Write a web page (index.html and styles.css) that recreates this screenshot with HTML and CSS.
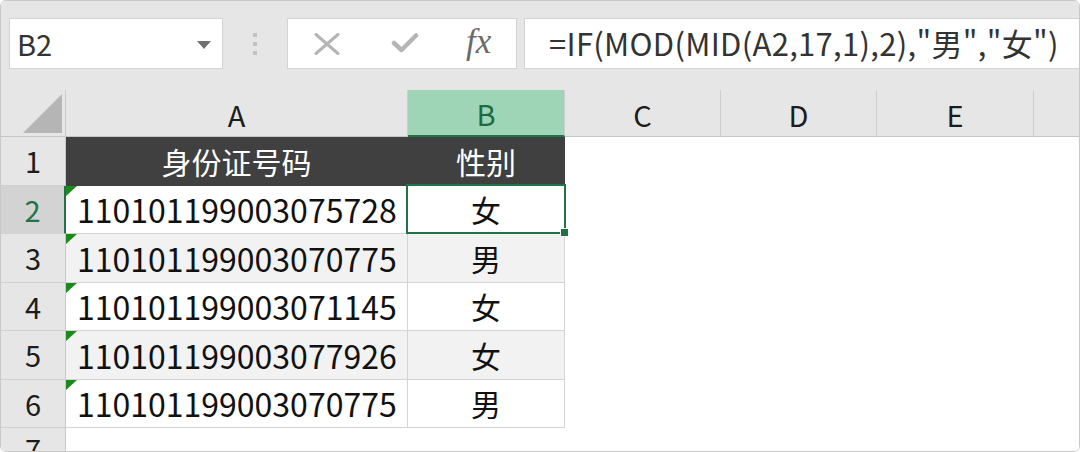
FILE: index.html
```html
<!DOCTYPE html>
<html lang="zh-CN">
<head>
<meta charset="utf-8">
<title>Excel</title>
<link rel="stylesheet" href="styles.css">
</head>
<body>
<div class="frame">
  <div class="toolbar">
    <div class="namebox"><span class="name">B2</span><span class="caret"></span></div>
    <div class="grip"><i></i><i></i><i></i></div>
    <div class="fxbox">
      <svg class="ico-x" width="28" height="22" viewBox="0 0 28 22"><path d="M3 1.5 L25 20.5 M25 1.5 L3 20.5" stroke="#b5b5b5" stroke-width="3" fill="none" stroke-linecap="round"/></svg>
      <svg class="ico-check" width="28" height="22" viewBox="0 0 28 22"><path d="M3 11 L10.5 18 L25 3.5" stroke="#b5b5b5" stroke-width="4.5" fill="none" stroke-linecap="round" stroke-linejoin="round"/></svg>
      <span class="fx">fx</span>
    </div>
    <div class="formula">=IF(MOD(MID(A2,17,1),2),"男","女")</div>
  </div>
  <div class="sheet">
    <div class="ch corner"><span class="tri"></span></div>
    <div class="ch">A</div>
    <div class="ch sel">B</div>
    <div class="ch">C</div>
    <div class="ch">D</div>
    <div class="ch">E</div>
    <div class="ch last"></div>

    <div class="rh">1</div>
    <div class="c head">身份证号码</div>
    <div class="c head">性别</div>
    <div class="blank"></div>

    <div class="rh rsel">2</div>
    <div class="c num"><span class="flag"></span>110101199003075728</div>
    <div class="c g active">女<span class="handle"></span></div>
    <div class="blank"></div>

    <div class="rh">3</div>
    <div class="c num alt"><span class="flag"></span>110101199003070775</div>
    <div class="c g alt">男</div>
    <div class="blank"></div>

    <div class="rh">4</div>
    <div class="c num"><span class="flag"></span>110101199003071145</div>
    <div class="c g">女</div>
    <div class="blank"></div>

    <div class="rh">5</div>
    <div class="c num alt"><span class="flag"></span>110101199003077926</div>
    <div class="c g alt">女</div>
    <div class="blank"></div>

    <div class="rh">6</div>
    <div class="c num"><span class="flag"></span>110101199003070775</div>
    <div class="c g">男</div>
    <div class="blank"></div>

    <div class="rh r7">7</div>
    <div class="empty"></div>
  </div>
</div>
</body>
</html>
```
FILE: styles.css
```css
* { box-sizing: border-box; margin: 0; padding: 0; }
html, body { width: 1080px; height: 452px; overflow: hidden; background: #fff; }
body { font-family: "Noto Sans CJK SC", "Noto Sans", sans-serif; }

.frame {
  width: 1080px; height: 452px;
  border: 1px solid #c9c9c9;
  border-radius: 6px;
  overflow: hidden;
  display: flex; flex-direction: column;
  background: #fff;
}

.toolbar {
  height: 89px;
  background: #e6e6e6;
  display: flex;
  align-items: flex-start;
  padding: 17px 0 0 8px;
  flex: none;
}
.namebox {
  width: 214px; height: 51px;
  background: #fff;
  border: 1px solid #d3d3d3;
  display: flex; align-items: center; justify-content: space-between;
  padding: 0 11px 0 7px;
}
.name { font-size: 29px; color: #333; line-height: 1; }
.caret {
  width: 0; height: 0;
  border-left: 7.5px solid transparent;
  border-right: 7.5px solid transparent;
  border-top: 8px solid #707070;
  margin-top: 2px;
}
.grip {
  width: 64px; height: 51px;
  display: flex; flex-direction: column; align-items: center; justify-content: center;
  gap: 5px;
}
.grip i { display: block; width: 4px; height: 4px; background: #c2c2c2; }
.fxbox {
  width: 230px; height: 51px;
  background: #fff;
  border: 1px solid #d3d3d3;
  display: flex; align-items: center;
  padding-left: 25px;
}
.ico-x { margin-right: 50px; }
.ico-check { margin-right: 47px; margin-top: -2px; }
.fx {
  font-family: "Liberation Serif", "DejaVu Serif", serif;
  font-style: italic;
  font-size: 35px;
  color: #6a6a6a;
  line-height: 1;
  margin-top: -4px;
}
.formula {
  flex: 1;
  height: 51px;
  margin-left: 7px;
  margin-right: -4px;
  background: #fff;
  border: 1px solid #d3d3d3;
  padding-left: 24px;
  font-size: 31px;
  letter-spacing: 0.3px;
  color: #333;
  line-height: 47px;
  white-space: nowrap;
}

.sheet {
  flex: 1;
  display: grid;
  grid-template-columns: 65px 342px 157px 156px 156px 157px 1fr;
  grid-template-rows: 47px repeat(6, 48.5px) 1fr;
  background: #fff;
}

.ch {
  background: #e6e6e6;
  border-right: 1px solid #cdcdcd;
  border-bottom: 1px solid #c4c4c4;
  display: flex; align-items: center; justify-content: center;
  font-size: 29px; color: #1c1c1c;
  line-height: 1;
  padding-top: 2px;
}
.ch.last { border-right: none; }
.ch.corner { border-right: 1px solid #cacaca; position: relative; }
.tri {
  position: absolute;
  right: 3px; bottom: 3px;
  width: 0; height: 0;
  border-left: 39px solid transparent;
  border-bottom: 39px solid #b5b5b5;
}
.ch.sel {
  background: #9fd5b7;
  color: #1e6b41;
  border-bottom: 2px solid #217346;
}

.rh {
  grid-column: 1;
  background: #e6e6e6;
  border-right: 1px solid #c8c8c8;
  border-bottom: 1px solid #d0d0d0;
  display: flex; align-items: center; justify-content: center;
  font-size: 29px; color: #1c1c1c;
  line-height: 1;
}
.rh.rsel {
  background: #d3d3d3;
  color: #217346;
  border-right: 2px solid #217346;
}
.rh.r7 { align-items: flex-start; padding-top: 6px; border-bottom: none; }

.c {
  position: relative;
  border-right: 1px solid #d4d4d4;
  border-bottom: 1px solid #d4d4d4;
  display: flex; align-items: center;
  font-size: 32px; color: #111;
  line-height: 1;
  background: #fff;
}
.c.alt { background: #f2f2f2; }
.c.head {
  background: #404040;
  color: #fff;
  justify-content: center;
  border-color: #404040;
  font-size: 30px;
}
.c.num { padding-left: 11px; }
.c.g { justify-content: center; font-size: 30px; }
.flag {
  position: absolute; left: 0; top: 0;
  width: 0; height: 0;
  border-top: 10px solid #1a8a1a;
  border-right: 11px solid transparent;
}
.c.active::after {
  content: "";
  position: absolute;
  left: -2px; top: -2px; right: -2px; bottom: -1px;
  border: 2px solid #217346;
  pointer-events: none;
}
.handle {
  position: absolute;
  right: -5px; bottom: -4px;
  width: 9px; height: 9px;
  background: #217346;
  border: 1px solid #fff;
  z-index: 2;
}
.blank { grid-column: 4 / 8; background: #fff; }
.empty { grid-column: 2 / 8; background: #fff; }
```
